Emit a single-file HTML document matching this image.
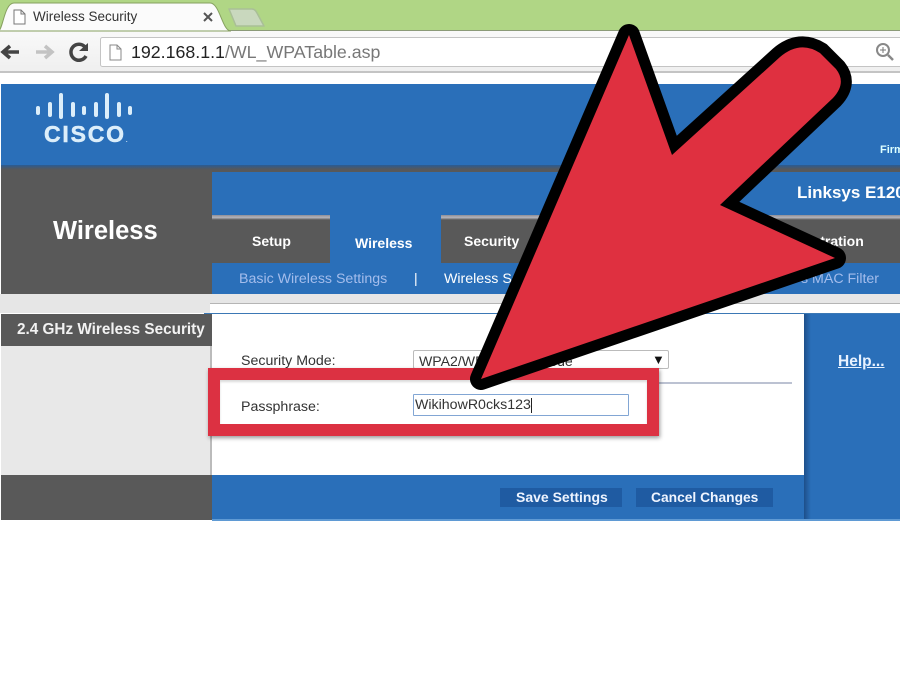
<!DOCTYPE html>
<html><head><meta charset="utf-8"><style>
html,body{margin:0;padding:0;background:#fff}
#p{position:relative;width:900px;height:675px;overflow:hidden;background:#fff;font-family:"Liberation Sans",sans-serif}
#p div{position:absolute}
.t{white-space:nowrap;line-height:1}
.w{color:#fff;font-weight:bold}
</style></head><body><div id="p">
<div style="left:0;top:0;width:900px;height:30px;background:#b0d685"></div>
<div style="left:0;top:30px;width:900px;height:42px;background:linear-gradient(#f9f9f9,#efefef);border-top:1px solid #8b9a78;box-sizing:border-box"></div>
<div style="left:0;top:71px;width:900px;height:2px;background:#c4c4c4"></div>
<svg style="position:absolute;left:0;top:0" width="900" height="84">
<path d="M-2,31 C3,31 4,3 14,3 L210,3 C220,3 222,31 231,31 Z" fill="#fbfbfb" stroke="#86a060" stroke-width="1"/>
<path d="M229,9 L252,9 Q255,9 257,13 L264,26 L236,26 Z" fill="#c9d8be" stroke="#a9bf96" stroke-width="1.500" stroke-linejoin="round"/>
<path d="M14,10 H21 L25,14 V24 H14 Z M21,10 V14 H25" fill="#fff" stroke="#777" stroke-width="1"/>
<path d="M204,13 L212,21 M212,13 L204,21" stroke="#555" stroke-width="2"/>
<path d="M19,52 H4 M10,46 L3,52 L10,58" fill="none" stroke="#444" stroke-width="3.500"/>
<path d="M36,52 H51 M45,46 L52,52 L45,58" fill="none" stroke="#c3c3c3" stroke-width="3.500"/>
<path d="M85,47 A8,8 0 1 0 86,56" fill="none" stroke="#444" stroke-width="3.500"/>
<path d="M79,51 L88,51 L88,43 Z" fill="#444"/>
<rect x="100.500" y="37.500" width="810" height="29" rx="2" fill="#fff" stroke="#c4c4c4"/>
<path d="M110,45 H117 L121,49 V60 H110 Z M117,45 V49 H121" fill="#fff" stroke="#888" stroke-width="1"/>
<circle cx="883" cy="50" r="6" fill="none" stroke="#888" stroke-width="2"/>
<path d="M888,55 L893,60" stroke="#888" stroke-width="2.500"/>
<path d="M880,50 H886 M883,47 V53" stroke="#777" stroke-width="1"/>
</svg>
<div class="t" style="left:33px;top:10px;font-size:13.500px;color:#333">Wireless Security</div>
<div class="t" style="left:131px;top:44px;font-size:17.800px;color:#222">192.168.1.1<span style="color:#777">/WL_WPATable.asp</span></div>

<div style="left:1px;top:84px;width:899px;height:83px;background:#2a6fb9"></div>
<div style="left:1px;top:165px;width:899px;height:7px;background:linear-gradient(#2a5c94,#55585c 60%,#595959)"></div>
<svg style="position:absolute;left:30px;top:88px" width="110" height="35">
<g stroke="#dceefa" stroke-width="4" stroke-linecap="round">
<path d="M8,20 V25 M20,16 V27 M31,7 V29 M43,16 V27 M54,20 V25 M66,16 V27 M77,7 V29 M89,16 V27 M100,20 V25"/>
</g></svg>
<div class="t" style="left:44px;top:123px;font-size:23px;font-weight:bold;color:#dceefa;letter-spacing:1.800px;-webkit-text-stroke:.5px #dceefa">CISCO<span style="font-size:6px;letter-spacing:0;-webkit-text-stroke:0">.</span></div>
<div class="t" style="left:880px;top:145px;font-size:11px;color:#dff;font-weight:bold">Firm</div>

<div style="left:1px;top:170px;width:211px;height:124px;background:#595959"></div>
<div class="t w" style="left:53px;top:219px;font-size:25.500px">Wireless</div>
<div style="left:212px;top:172px;width:688px;height:43px;background:#2a6fb9"></div>
<div class="t w" style="left:797px;top:184px;font-size:17px">Linksys E120</div>
<div style="left:212px;top:215px;width:688px;height:48px;background:#595959"></div>
<div style="left:212px;top:215px;width:688px;height:5px;background:linear-gradient(#8d8d96,#b5b5bc 50%,#555)"></div>
<div style="left:330px;top:214px;width:111px;height:49px;background:#2a6fb9"></div>
<div class="t w" style="left:252px;top:234px;font-size:14px">Setup</div>
<div class="t w" style="left:355px;top:236px;font-size:14px">Wireless</div>
<div class="t w" style="left:464px;top:234px;font-size:14px">Security</div>
<div class="t w" style="left:765px;top:234px;font-size:14px">Administration</div>
<div style="left:212px;top:263px;width:688px;height:31px;background:#2a6fb9"></div>
<div class="t" style="left:239px;top:272px;font-size:14.200px;color:#a4bdec">Basic Wireless Settings</div>
<div class="t" style="left:414px;top:271px;font-size:14px;color:#fff">|</div>
<div class="t" style="left:444px;top:272px;font-size:14.200px;color:#fff">Wireless Security</div>
<div class="t" style="left:801px;top:272px;font-size:14.200px;color:#a4bdec">s MAC Filter</div>

<div style="left:0;top:294px;width:900px;height:20px;background:#e6e6e6"></div>
<div style="left:1px;top:346px;width:211px;height:129px;background:#e8e8e8"></div>
<div style="left:0;top:313px;width:212px;height:1px;background:#fff"></div>
<div style="left:1px;top:314px;width:211px;height:32px;background:#595959"></div>
<div class="t w" style="left:17px;top:322px;font-size:15.300px;color:#f2f2f2">2.4 GHz Wireless Security</div>
<div style="left:210px;top:303px;width:690px;height:10px;background:#fff;border-top:1.500px solid #b5b5b5;box-sizing:border-box"></div>
<div style="left:204px;top:313px;width:696px;height:1px;background:#3b78b5"></div>
<div style="left:210px;top:346px;width:2px;height:129px;background:#bbb"></div>
<div style="left:212px;top:314px;width:592px;height:161px;background:#fff"></div>
<div style="left:804px;top:314px;width:96px;height:206px;background:linear-gradient(90deg,#1d4f8a,#2a6fb9 7px)"></div>
<div class="t w" style="left:838px;top:354px;font-size:15.500px;text-decoration:underline;color:#e8f2ff">Help...</div>

<div class="t" style="left:241px;top:354px;font-size:14.200px;color:#333">Security Mode:</div>
<div class="t" style="left:413px;top:350px;width:256px;height:19px;border:1px solid #bbb;box-sizing:border-box;border-radius:2px;background:#fff;font-size:14.100px;color:#333;padding:3px 0 0 5px">WPA2/WPA Mixed Mode</div>
<div class="t" style="left:652px;top:353px;font-size:13px;color:#111">▼</div>
<div style="left:659px;top:382px;width:133px;height:1.500px;background:#bcc2d2"></div>

<div style="left:413px;top:394px;width:216px;height:22px;border:1.500px solid #82a6d4;box-sizing:border-box;border-radius:1px;background:#fff"></div>
<div class="t" style="left:415px;top:398px;font-size:14.200px;color:#333">WikihowR0cks123</div>
<div style="left:531px;top:398px;width:1px;height:15px;background:#222"></div>
<div class="t" style="left:241px;top:400px;font-size:14.200px;color:#333">Passphrase:</div>

<div style="left:1px;top:475px;width:211px;height:45px;background:#595959"></div>
<div style="left:212px;top:475px;width:592px;height:45px;background:#2a6fb9"></div>
<div style="left:212px;top:519px;width:688px;height:1.500px;background:#5f9ad4"></div>
<div style="left:500px;top:488px;width:122px;height:19px;background:#1f5ba2"></div>
<div style="left:636px;top:488px;width:137px;height:19px;background:#1f5ba2"></div>
<div class="t w" style="left:516px;top:490px;font-size:14px;color:#eef4ff">Save Settings</div>
<div class="t w" style="left:651px;top:491px;font-size:13.800px;color:#eef4ff">Cancel Changes</div>

<div style="left:208px;top:368px;width:451px;height:68px;border:12px solid #dc3142;box-sizing:border-box;box-shadow:1px 2px 4px rgba(0,0,0,.4),inset 0 2px 2px rgba(0,0,0,.15)"></div>

<svg style="position:absolute;left:0;top:0" width="900" height="675">
<path d="M672,155 L780,57 Q800,40 820,53 L836,69 Q847,83 833,98 L720,205 L835,258 L481,379 L629,35 Z" fill="#df3040" stroke="#000" stroke-width="22" stroke-linejoin="round" paint-order="stroke"/>
</svg>
</div></body></html>
